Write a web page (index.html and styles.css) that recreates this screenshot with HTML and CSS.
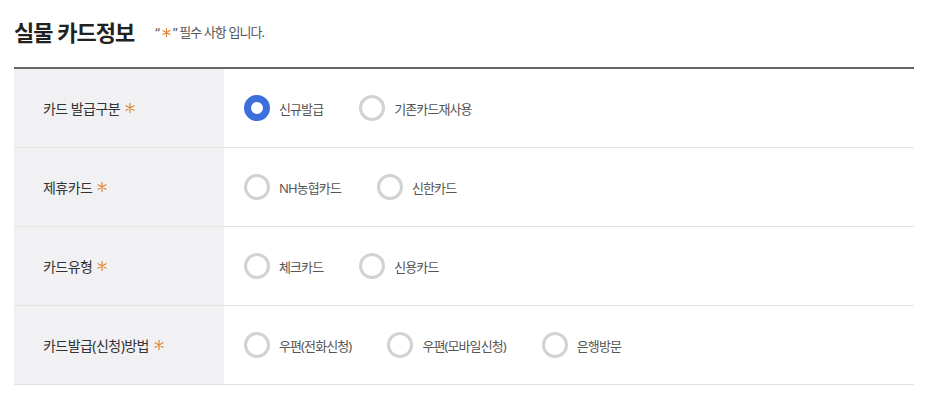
FILE: index.html
```html
<!DOCTYPE html>
<html lang="ko">
<head>
<meta charset="utf-8">
<title>실물 카드정보</title>
<link rel="stylesheet" href="styles.css">
</head>
<body>
<div class="page">
  <div class="head">
    <h2 class="title">실물 카드정보</h2>
    <p class="note">“<svg class="ast ast-sm" viewBox="0 0 12 12"><path d="M6 0.5V11.5M1.2 3.25L10.8 8.75M1.2 8.75L10.8 3.25"/></svg>” 필수 사항 입니다.</p>
  </div>
  <div class="table">
    <div class="row">
      <div class="th">카드 발급구분<svg class="ast" viewBox="0 0 12 12"><path d="M6 0.5V11.5M1.2 3.25L10.8 8.75M1.2 8.75L10.8 3.25"/></svg></div>
      <div class="td">
        <label class="opt"><input type="radio" name="issue" checked><span>신규발급</span></label>
        <label class="opt"><input type="radio" name="issue"><span>기존카드재사용</span></label>
      </div>
    </div>
    <div class="row">
      <div class="th">제휴카드<svg class="ast" viewBox="0 0 12 12"><path d="M6 0.5V11.5M1.2 3.25L10.8 8.75M1.2 8.75L10.8 3.25"/></svg></div>
      <div class="td">
        <label class="opt"><input type="radio" name="partner"><span>NH농협카드</span></label>
        <label class="opt"><input type="radio" name="partner"><span>신한카드</span></label>
      </div>
    </div>
    <div class="row">
      <div class="th">카드유형<svg class="ast" viewBox="0 0 12 12"><path d="M6 0.5V11.5M1.2 3.25L10.8 8.75M1.2 8.75L10.8 3.25"/></svg></div>
      <div class="td">
        <label class="opt"><input type="radio" name="type"><span>체크카드</span></label>
        <label class="opt"><input type="radio" name="type"><span>신용카드</span></label>
      </div>
    </div>
    <div class="row">
      <div class="th">카드발급(신청)방법<svg class="ast" viewBox="0 0 12 12"><path d="M6 0.5V11.5M1.2 3.25L10.8 8.75M1.2 8.75L10.8 3.25"/></svg></div>
      <div class="td">
        <label class="opt"><input type="radio" name="method"><span>우편(전화신청)</span></label>
        <label class="opt"><input type="radio" name="method"><span>우편(모바일신청)</span></label>
        <label class="opt"><input type="radio" name="method"><span>은행방문</span></label>
      </div>
    </div>
  </div>
</div>
</body>
</html>
```

FILE: styles.css
```css
* { box-sizing: border-box; }
html, body { margin: 0; padding: 0; background: #fff; }
body {
  font-family: "Noto Sans", "Noto Sans CJK KR", sans-serif;
  color: #333;
}
.page {
  width: 900px;
  margin-left: 14px;
}
.head {
  display: flex;
  align-items: center;
  gap: 21px;
  padding: 17px 0 20px;
}
.title {
  margin: 0;
  font-size: 22px;
  line-height: 30px;
  font-weight: 700;
  letter-spacing: -1px;
  color: #222;
}
.note {
  margin: 0;
  font-size: 13px;
  line-height: 30px;
  letter-spacing: -0.9px;
  color: #555;
  display: flex;
  align-items: center;
}
.ast {
  width: 10px;
  height: 10px;
  margin-left: 5px;
  flex: none;
}
.ast path {
  stroke: #dc842a;
  stroke-width: 1.35;
  stroke-linecap: round;
  fill: none;
}
.ast-sm {
  width: 9px;
  height: 9px;
  margin: 0 2px 0 3px;
}
.table {
  border-top: 2px solid #666;
}
.row {
  display: flex;
  height: 79px;
  border-bottom: 1px solid #e3e3e3;
}
.th {
  width: 210px;
  flex: none;
  background: #f1f1f3;
  padding-left: 29px;
  display: flex;
  align-items: center;
  font-size: 14px;
  letter-spacing: -0.55px;
  color: #333;
}
.td {
  flex: 1;
  display: flex;
  align-items: center;
  padding-left: 20px;
  gap: 36px;
}
.opt {
  display: flex;
  align-items: center;
  gap: 9px;
  font-size: 13px;
  letter-spacing: -0.9px;
  color: #555;
  cursor: pointer;
}
.opt input {
  appearance: none;
  -webkit-appearance: none;
  margin: 0;
  width: 26px;
  height: 26px;
  border: 3px solid #d2d2d2;
  border-radius: 50%;
  background: #fff;
  flex: none;
}
.opt input:checked {
  border: 7px solid #3c6fdc;
}
```
